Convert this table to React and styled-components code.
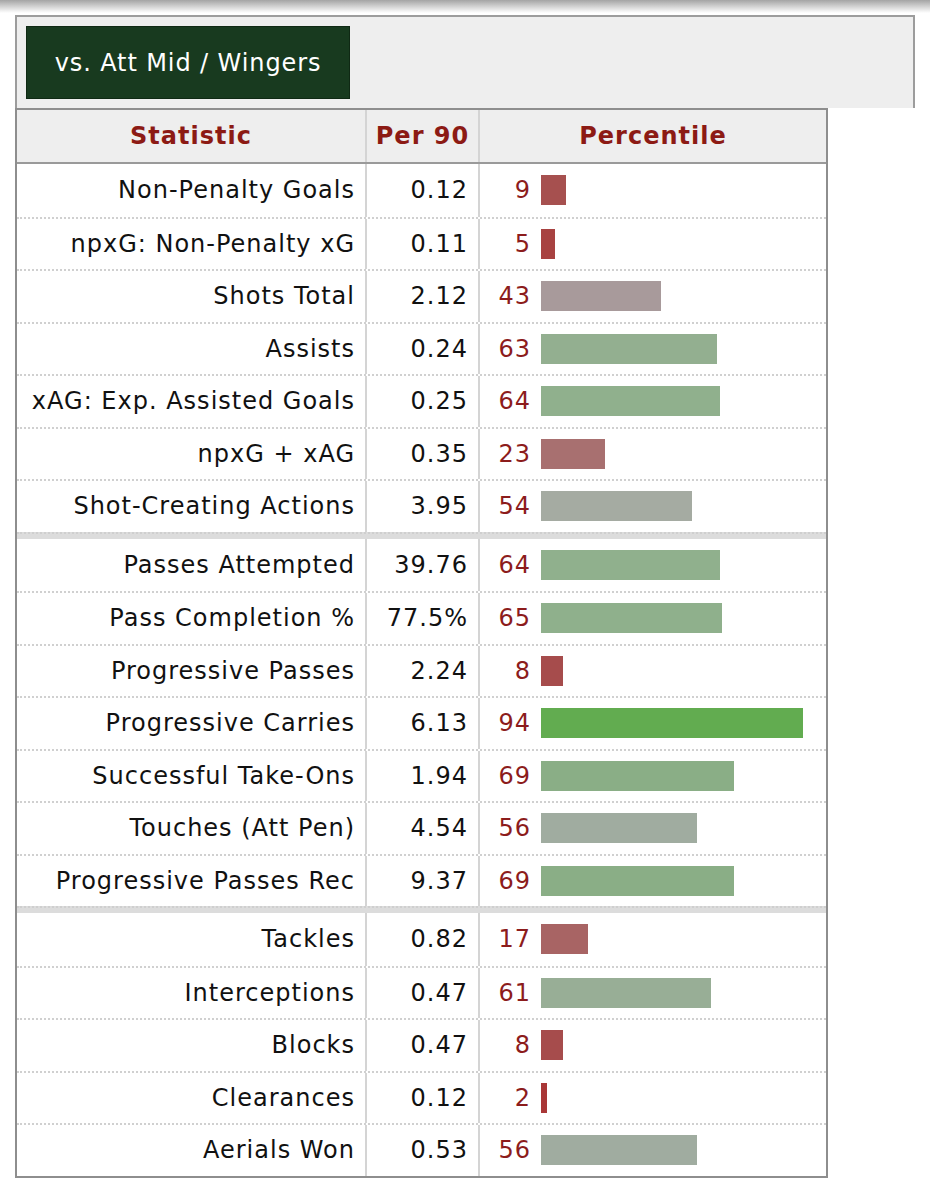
import React from "react";
import styled, { createGlobalStyle } from "styled-components";

const Global = createGlobalStyle`
  html, body { margin: 0; padding: 0; background: #ffffff; }
  body { font-family: "DejaVu Sans", Verdana, sans-serif; color: #111; }
`;

const Shade = styled.div`
  height: 13px;
  background: linear-gradient(#a4a4a4, #f2f2f2 85%, #ffffff);
`;

const Page = styled.div`
  padding: 2px 0 0 15px;
`;

const Panel = styled.div`
  width: 900px;
  box-sizing: border-box;
  border: 2px solid #9c9c9c;
  border-bottom: none;
  background: #eeeeee;
  padding: 9px;
`;

const FilterButton = styled.div`
  width: 324px;
  height: 73px;
  box-sizing: border-box;
  background: #183a1f;
  color: #ffffff;
  font-size: 24px;
  letter-spacing: 0.9px;
  display: flex;
  align-items: center;
  justify-content: center;
  border: 1px solid #0f2914;
`;

const Table = styled.div`
  width: 813px;
  box-sizing: border-box;
  border: 2px solid #8e8e8e;
  background: #ffffff;
`;

const cols = "348px 113px 1fr";

const HeadRow = styled.div`
  display: grid;
  grid-template-columns: ${cols};
  height: 54px;
  box-sizing: border-box;
  background: #eeeeee;
  border-bottom: 2px solid #9a9a9a;
`;

const HeadCell = styled.div`
  display: flex;
  align-items: center;
  justify-content: center;
  font-weight: bold;
  font-size: 24px;
  letter-spacing: 1px;
  color: #8c1a14;
  border-left: ${(p) => (p.$first ? "none" : "2px solid #d4d4d4")};
`;

const Row = styled.div`
  display: grid;
  grid-template-columns: ${cols};
  height: 52.5px;
  box-sizing: border-box;
  border-top: ${(p) => (p.$first ? "none" : "2px dotted #d0d0d0")};
`;

const Separator = styled.div`
  height: 7px;
  box-sizing: border-box;
  border-top: 2px dotted #cfcfcf;
  background: #dcdcdc;
`;

const StatCell = styled.div`
  display: flex;
  align-items: center;
  justify-content: flex-end;
  padding-right: 10px;
  font-size: 24px;
  letter-spacing: 1px;
  white-space: nowrap;
`;

const ValueCell = styled.div`
  display: flex;
  align-items: center;
  justify-content: flex-end;
  padding-right: 10px;
  font-size: 24px;
  letter-spacing: 1px;
  border-left: 2px solid #d4d4d4;
`;

const PctCell = styled.div`
  display: flex;
  align-items: center;
  gap: 10px;
  border-left: 2px solid #d4d4d4;
`;

const PctNum = styled.span`
  width: 51px;
  text-align: right;
  font-size: 24px;
  letter-spacing: 1px;
  color: #8c1c1c;
`;

const Bar = styled.div`
  height: 30px;
`;

const stops = [
  [0, [170, 48, 48]],
  [9, [166, 80, 79]],
  [17, [168, 100, 100]],
  [23, [168, 112, 112]],
  [43, [168, 154, 155]],
  [54, [165, 171, 162]],
  [56, [160, 172, 160]],
  [61, [152, 174, 150]],
  [64, [144, 176, 141]],
  [69, [138, 174, 134]],
  [94, [98, 172, 80]],
  [100, [90, 172, 70]],
];

function barColor(v) {
  for (let i = 0; i < stops.length - 1; i++) {
    const [a, ca] = stops[i];
    const [b, cb] = stops[i + 1];
    if (v >= a && v <= b) {
      const t = (v - a) / (b - a);
      const c = ca.map((x, k) => Math.round(x + (cb[k] - x) * t));
      return `rgb(${c[0]},${c[1]},${c[2]})`;
    }
  }
  return "#999";
}

const groups = [
  [
    ["Non-Penalty Goals", "0.12", 9],
    ["npxG: Non-Penalty xG", "0.11", 5],
    ["Shots Total", "2.12", 43],
    ["Assists", "0.24", 63],
    ["xAG: Exp. Assisted Goals", "0.25", 64],
    ["npxG + xAG", "0.35", 23],
    ["Shot-Creating Actions", "3.95", 54],
  ],
  [
    ["Passes Attempted", "39.76", 64],
    ["Pass Completion %", "77.5%", 65],
    ["Progressive Passes", "2.24", 8],
    ["Progressive Carries", "6.13", 94],
    ["Successful Take-Ons", "1.94", 69],
    ["Touches (Att Pen)", "4.54", 56],
    ["Progressive Passes Rec", "9.37", 69],
  ],
  [
    ["Tackles", "0.82", 17],
    ["Interceptions", "0.47", 61],
    ["Blocks", "0.47", 8],
    ["Clearances", "0.12", 2],
    ["Aerials Won", "0.53", 56],
  ],
];

export default function App() {
  return (
    <>
      <Global />
      <Shade />
      <Page>
        <Panel>
          <FilterButton>vs. Att Mid / Wingers</FilterButton>
        </Panel>
        <Table>
          <HeadRow>
            <HeadCell $first>Statistic</HeadCell>
            <HeadCell>Per 90</HeadCell>
            <HeadCell>Percentile</HeadCell>
          </HeadRow>
          {groups.map((g, gi) => (
            <React.Fragment key={gi}>
              {gi > 0 && <Separator />}
              {g.map(([name, val, pct], i) => (
                <Row key={name} $first={i === 0}>
                  <StatCell>{name}</StatCell>
                  <ValueCell>{val}</ValueCell>
                  <PctCell>
                    <PctNum>{pct}</PctNum>
                    <Bar style={{ width: `${pct * 2.79}px`, background: barColor(pct) }} />
                  </PctCell>
                </Row>
              ))}
            </React.Fragment>
          ))}
        </Table>
      </Page>
    </>
  );
}
